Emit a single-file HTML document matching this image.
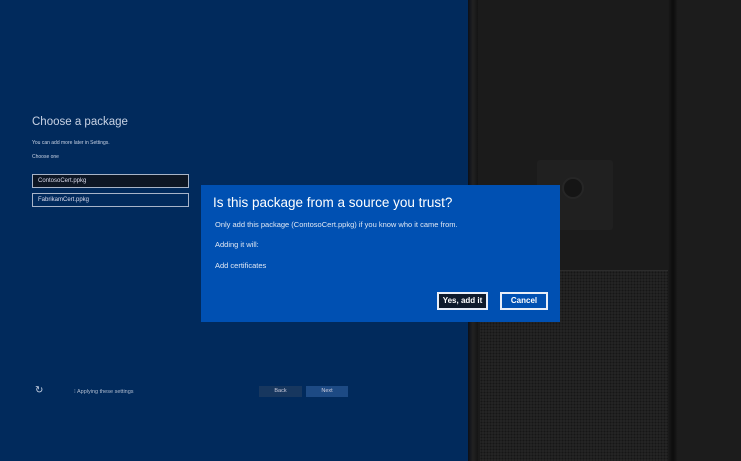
<!DOCTYPE html>
<html><head><meta charset="utf-8"><style>
*{margin:0;padding:0;box-sizing:border-box}
body{width:741px;height:461px;overflow:hidden;position:relative;background:#1c1c1c;font-family:"Liberation Sans",sans-serif;color:#fff}
.left{position:absolute;left:0;top:0;width:468px;height:461px;background:#012a5c}
.edge{position:absolute;left:468px;top:0;width:10px;height:461px;background:linear-gradient(90deg,#0b0f18,#222 50%,#141414)}
.dev{position:absolute;left:478px;top:0;width:194px;height:461px;background:#1b1b1b}
.shadow{position:absolute;left:668px;top:0;width:10px;height:461px;background:linear-gradient(90deg,#1b1b1b,#0c0c0c 50%,#1d1d1d)}
.grille{position:absolute;left:480px;top:270px;width:190px;height:191px;background-color:#242424;background-image:radial-gradient(#161616 35%,transparent 45%);background-size:3px 3px;border-top:1px solid #2c2c2c}
.cam{position:absolute;left:537px;top:160px;width:76px;height:70px;background:#202020;border-radius:3px}
.lens{position:absolute;left:562px;top:177px;width:22px;height:22px;border-radius:50%;background:#151515;border:2px solid #262626}
.t{position:absolute;white-space:nowrap}
.in{position:absolute;left:32px;width:157px;height:14px;border:1px solid #a8b4c8;font-size:6px;padding:3px 5px;color:#dde}
.dlg{position:absolute;left:201px;top:185px;width:359px;height:137px;background:#0050b2}
.btn{position:absolute;top:107px;height:18px;border:2px solid #e8eef8;font-size:8px;font-weight:bold;text-align:center;line-height:14px}
.nb{position:absolute;top:386px;height:11px;font-size:5.5px;text-align:center;line-height:11px;color:#ccd}
</style></head><body>
<div class="left"></div>
<div class="edge"></div>
<div class="dev"></div>
<div class="grille"></div>
<div class="cam"></div><div class="lens"></div>
<div class="shadow"></div>
<div class="t" style="left:32px;top:116px;font-size:11.5px;color:#c8d2e4">Choose a package</div>
<div class="t" style="left:32px;top:140px;font-size:5px;color:#c8d2e4">You can add more later in Settings.</div>
<div class="t" style="left:32px;top:154px;font-size:5px;color:#c8d2e4">Choose one</div>
<div class="in" style="top:174px;background:#0d1624">ContosoCert.ppkg</div>
<div class="in" style="top:193px">FabrikamCert.ppkg</div>
<div class="t" style="left:35px;top:385px;font-size:10px;color:#c8d2e4">&#x21BB;</div>
<div class="t" style="left:74px;top:389px;font-size:5.5px;color:#b0bccf">&#x205D; Applying these settings</div>
<div class="nb" style="left:259px;width:43px;background:#17375f">Back</div>
<div class="nb" style="left:306px;width:42px;background:#1d4a84">Next</div>
<div class="dlg">
<div class="t" style="left:12px;top:10px;font-size:13.5px">Is this package from a source you trust?</div>
<div class="t" style="left:14px;top:35px;font-size:7.5px;color:#e0e8f4">Only add this package (ContosoCert.ppkg) if you know who it came from.</div>
<div class="t" style="left:14px;top:55px;font-size:7.5px;color:#e0e8f4">Adding it will:</div>
<div class="t" style="left:14px;top:76px;font-size:7.5px;color:#e0e8f4">Add certificates</div>
<div class="btn" style="left:236px;width:51px;background:#0f1b2c">Yes, add it</div>
<div class="btn" style="left:299px;width:48px;background:#0050b2">Cancel</div>
</div>
</body></html>
